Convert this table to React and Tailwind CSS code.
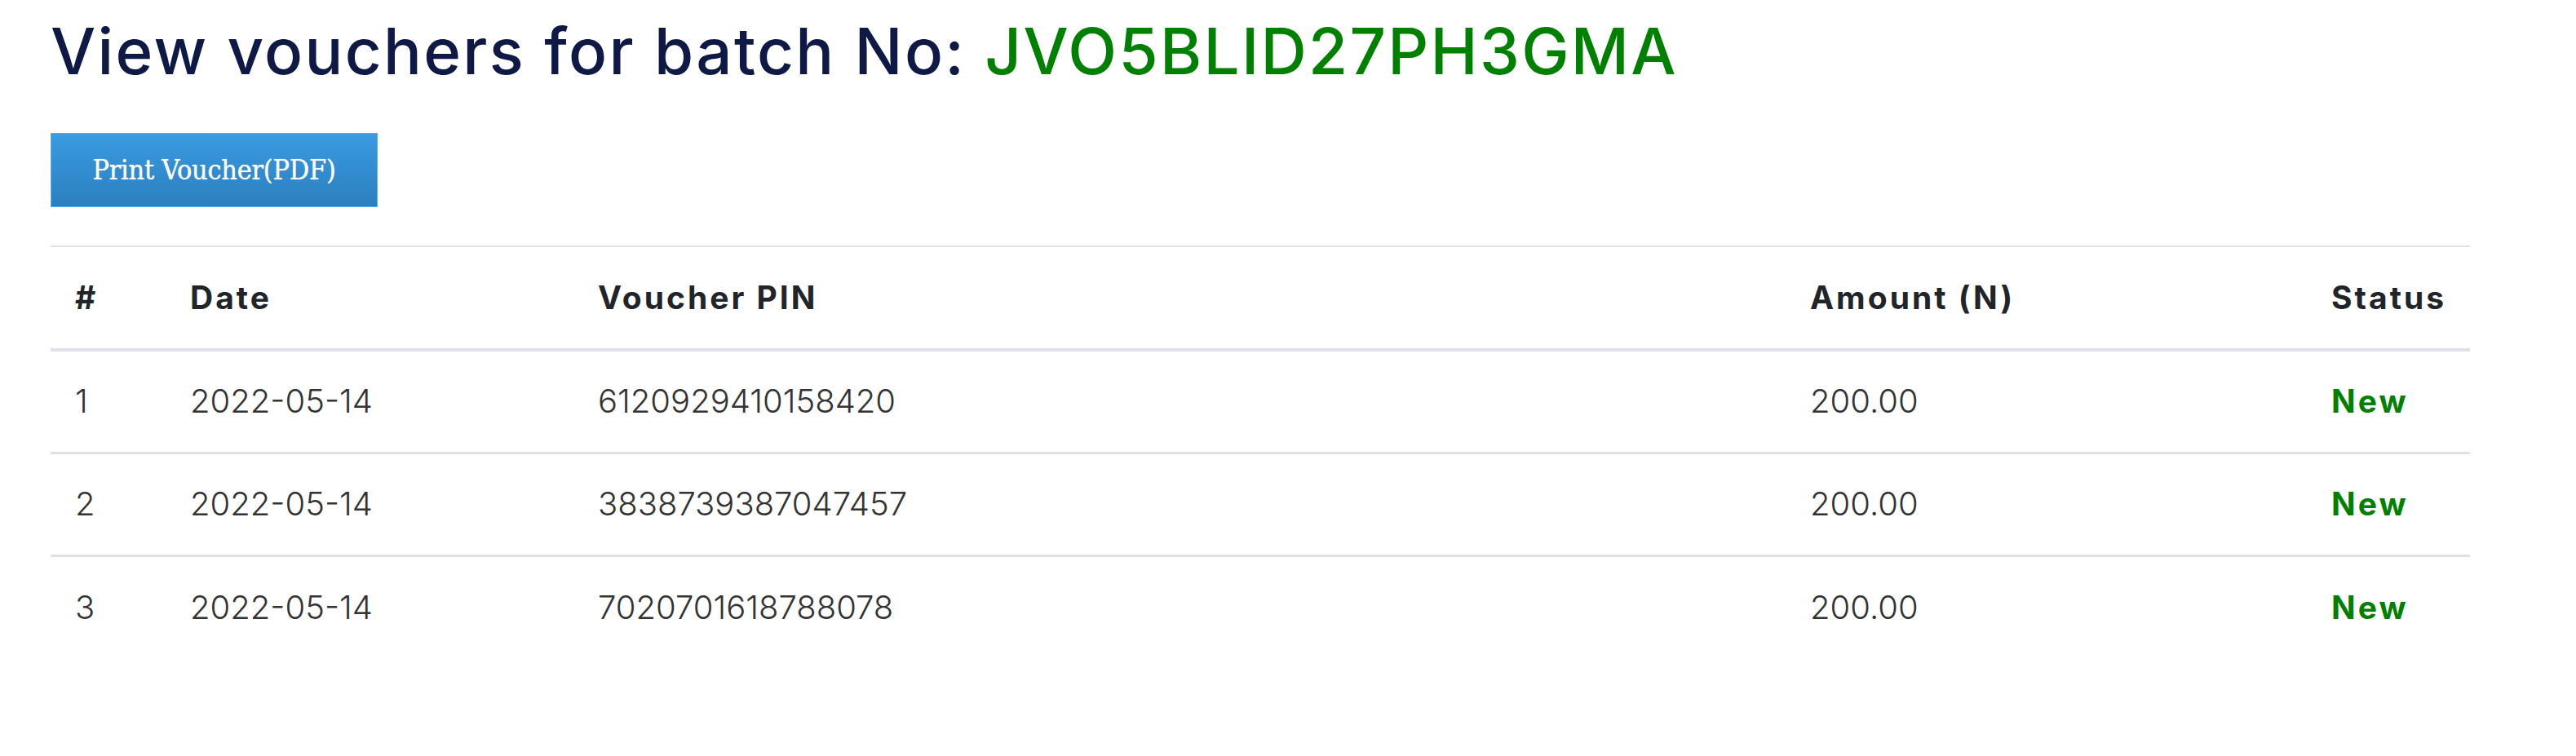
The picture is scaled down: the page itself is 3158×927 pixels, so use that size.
import React from "react";

const vouchers = [
  { id: 1, date: "2022-05-14", pin: "6120929410158420", amount: "200.00", status: "New" },
  { id: 2, date: "2022-05-14", pin: "3838739387047457", amount: "200.00", status: "New" },
  { id: 3, date: "2022-05-14", pin: "7020701618788078", amount: "200.00", status: "New" },
];

const App = () => {
  return (
    <div className="min-h-screen bg-white font-['Inter',sans-serif]">
      <div className="px-[62px] pt-[18px]">
        {/* Page title */}
        <h1 className="text-[78px] leading-[90px] font-medium text-[#0e1a45] tracking-[2.3px]">
          View vouchers for batch No: <span className="text-[#008000]">JVO5BLID27PH3GMA</span>
        </h1>

        {/* Print button */}
        <button className="mt-[55px] h-[91px] w-[401px] bg-gradient-to-b from-[#3a9be2] to-[#2b7fbe] border border-[#5aaee8] text-white font-['DejaVu_Serif_Condensed','Liberation_Serif',serif] text-[34px] tracking-[-0.3px] [text-shadow:0_0_1px_rgba(255,255,255,0.8)]">
          Print Voucher(PDF)
        </button>

        {/* Vouchers table */}
        <table className="mt-[47px] w-[2966px] table-fixed border-collapse text-[#212529]">
          <colgroup>
            <col className="w-[141px]" />
            <col className="w-[500px]" />
            <col className="w-[1486px]" />
            <col className="w-[639px]" />
            <col className="w-[200px]" />
          </colgroup>
          <thead>
            <tr className="border-t-[2px] border-[#dee2e6] text-left">
              <th className="h-[127px] pl-[30px] text-[39px] font-bold tracking-[3px] border-b-[4px] border-[#dee2e6]">#</th>
              <th className="pl-[30px] text-[39px] font-bold tracking-[3px] border-b-[4px] border-[#dee2e6]">Date</th>
              <th className="pl-[30px] text-[39px] font-bold tracking-[3px] border-b-[4px] border-[#dee2e6]">Voucher PIN</th>
              <th className="pl-[30px] text-[39px] font-bold tracking-[3px] border-b-[4px] border-[#dee2e6]">Amount (N)</th>
              <th className="pl-[30px] text-[39px] font-bold tracking-[3px] border-b-[4px] border-[#dee2e6]">Status</th>
            </tr>
          </thead>
          <tbody>
            {vouchers.map((v, i) => (
              <tr key={v.id} className={i > 0 ? "border-t-[3px] border-[#dee2e6]" : ""}>
                <td className="h-[126px] pl-[30px] text-[40px] font-light text-[#333]">{v.id}</td>
                <td className="pl-[30px] text-[40px] font-light text-[#333]">{v.date}</td>
                <td className="pl-[30px] text-[40px] font-light text-[#333]">{v.pin}</td>
                <td className="pl-[30px] text-[40px] font-light text-[#333]">{v.amount}</td>
                <td className="pl-[30px] text-[39px] font-bold tracking-[3px] text-[#008000]">{v.status}</td>
              </tr>
            ))}
          </tbody>
        </table>
      </div>
    </div>
  );
};

export default App;
